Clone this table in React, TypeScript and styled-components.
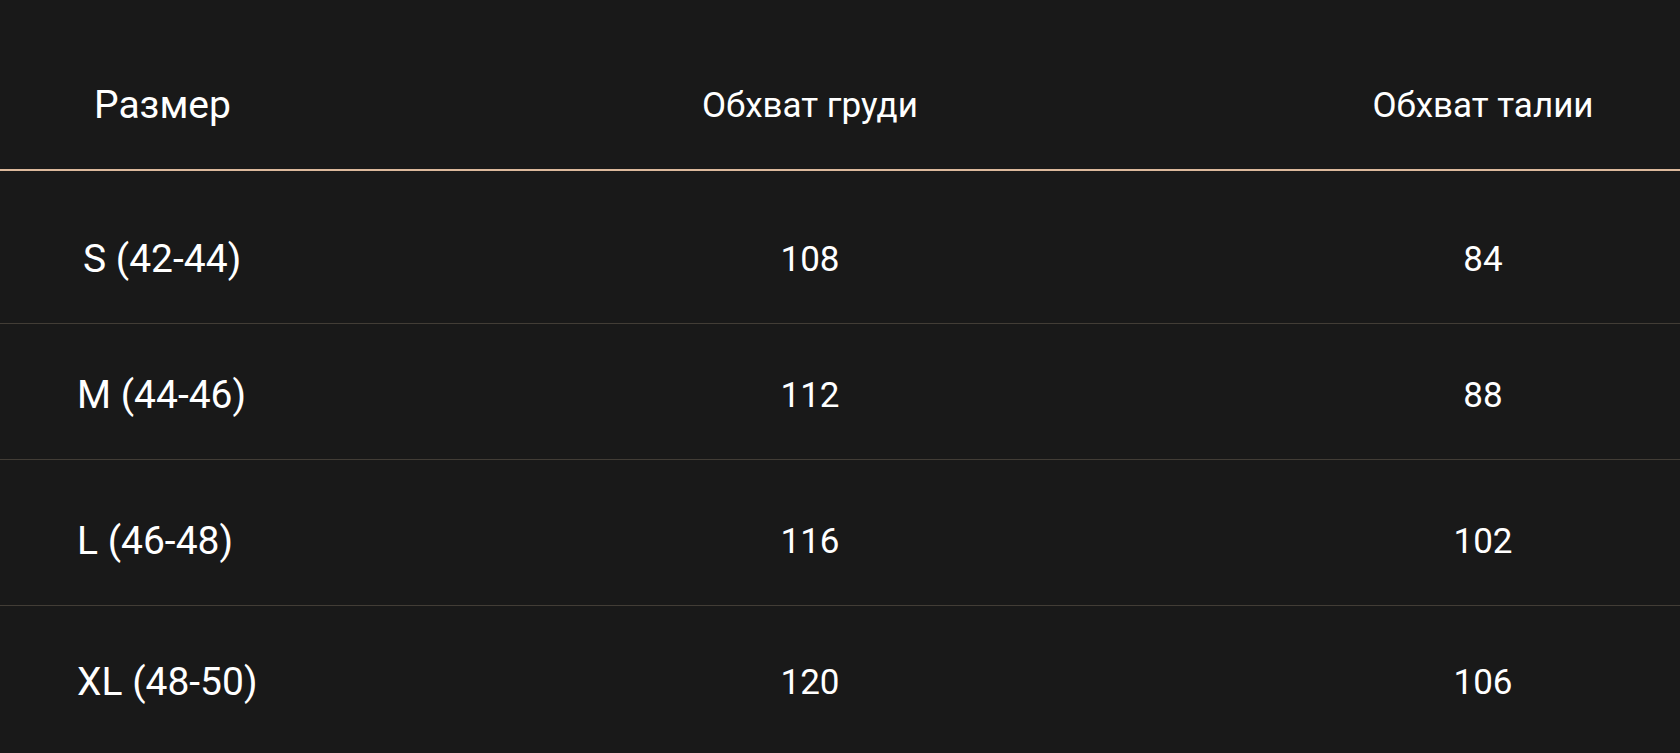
import styled, { createGlobalStyle } from "styled-components";

const GlobalStyle = createGlobalStyle`
  html, body {
    margin: 0;
    padding: 0;
    background: #191919;
  }
  body {
    font-family: Roboto, "Noto Sans", "Liberation Sans", sans-serif;
    color: #ffffff;
  }
`;

const Tabell = styled.div`
  width: 1680px;
  height: 753px;
  overflow: hidden;
  background: #191919;
`;

const Rad = styled.div<{ $hoyde: number; $header?: boolean }>`
  display: grid;
  grid-template-columns: 334px 1fr 394px;
  align-items: end;
  height: ${(p) => p.$hoyde}px;
  box-sizing: border-box;
  border-bottom: ${(p) => (p.$header ? "2px solid #dcb99c" : "1px solid #423d36")};
  &:last-child {
    border-bottom: none;
  }
`;

const Celle = styled.div<{ $storrelse: number; $venstre?: number }>`
  font-size: ${(p) => p.$storrelse}px;
  line-height: 1;
  padding-bottom: ${(p) => 64 - p.$storrelse / 2}px;
  padding-left: ${(p) => p.$venstre ?? 0}px;
  text-align: ${(p) => (p.$venstre !== undefined ? "left" : "center")};
  white-space: nowrap;
`;

const rader = [
    { storrelse: "S (42-44)", bryst: 108, midje: 84, hoyde: 153, venstre: 83 },
    { storrelse: "M (44-46)", bryst: 112, midje: 88, hoyde: 136, venstre: 77 },
    { storrelse: "L (46-48)", bryst: 116, midje: 102, hoyde: 146, venstre: 77 },
    { storrelse: "XL (48-50)", bryst: 120, midje: 106, hoyde: 140, venstre: 77 },
];

export default function App() {
    return (
        <>
            <GlobalStyle />
            <Tabell>
                <Rad $hoyde={171} $header>
                    <Celle $storrelse={39} $venstre={94}>Размер</Celle>
                    <Celle $storrelse={35}>Обхват груди</Celle>
                    <Celle $storrelse={35}>Обхват талии</Celle>
                </Rad>
                {rader.map((rad) => (
                    <Rad key={rad.storrelse} $hoyde={rad.hoyde}>
                        <Celle $storrelse={39} $venstre={rad.venstre}>{rad.storrelse}</Celle>
                        <Celle $storrelse={35}>{rad.bryst}</Celle>
                        <Celle $storrelse={35}>{rad.midje}</Celle>
                    </Rad>
                ))}
            </Tabell>
        </>
    );
}
